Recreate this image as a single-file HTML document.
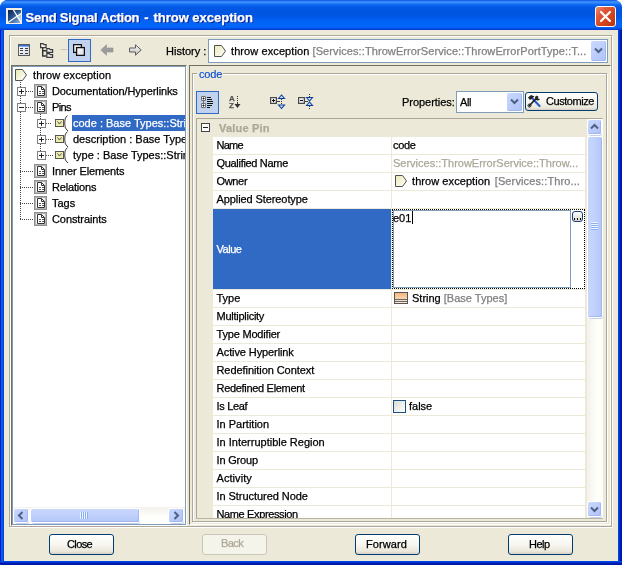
<!DOCTYPE html>
<html><head><meta charset="utf-8"><title>Send Signal Action - throw exception</title>
<style>
*{box-sizing:border-box;margin:0;padding:0}
html,body{width:622px;height:565px;overflow:hidden;background:#fff}
body{font-family:"Liberation Sans",sans-serif;font-size:11px;color:#000;position:relative;-webkit-text-stroke:0.25px currentColor}
.a{position:absolute}
.t{position:absolute;white-space:nowrap;line-height:13px;height:13px}
#win{will-change:transform;left:0;top:0;width:622px;height:565px;background:#0054e3;border-radius:8px 8px 0 0;overflow:hidden}
#title{left:0;top:0;width:622px;height:30px;background:linear-gradient(to bottom,#0a4fe0 0,#3f93ff 6%,#2f86fc 10%,#0d68f0 16%,#0359e4 24%,#0054e0 45%,#0058e8 58%,#0062f5 70%,#0066fa 85%,#0060f4 92%,#0048dc 96.5%,#0038cc 100%)}
#ttext{left:25.500px;top:9.500px;letter-spacing:-0.07px;font-size:13px;font-weight:bold;color:#fff;text-shadow:1px 1px 0 #0a1883;line-height:16px;height:16px}
#client{left:4px;top:30px;width:614px;height:531px;background:#ece9d8}
#close{left:595px;top:6px;width:21px;height:21px;border:1px solid #fff;border-radius:3px;background:linear-gradient(135deg,#ec8b6c 0%,#e0583a 30%,#d3451f 60%,#b8320c 100%)}
.etch{border:1px solid #aca899;box-shadow:1px 1px 0 #fff, inset 1px 1px 0 #fff}
.btn{height:21px;width:65px;border:1px solid #003c74;border-radius:3px;background:linear-gradient(to bottom,#fff 0%,#f7f6f0 50%,#ebe8dc 85%,#d6d0c5 100%);text-align:center;line-height:19px}
.row{position:absolute;left:213px;width:372px;height:17px;background:#fff}
.lbl{position:absolute;left:216.500px;white-space:nowrap;line-height:13px;height:13px}
.val{position:absolute;left:393px;white-space:nowrap;line-height:13px;height:13px}
.g{color:#aca899}
.tl{position:absolute;white-space:nowrap;line-height:13px;height:13px}
.sb{position:absolute;background:linear-gradient(135deg,#cbd9fe 0%,#bdcdfb 50%,#b0c2f6 100%);border-radius:2px;box-shadow:0 0 0 1px #fff,inset -1px -1px 0 #a3b8f3,1px 2px 0 0 #c5d0ee}
</style></head><body>
<div id="win" class="a">
<div id="title" class="a"></div>
<svg class="a" style="left:6px;top:8px" width="16" height="16" viewBox="0 0 16 16">
<defs><linearGradient id="pg" x1="0" y1="0" x2="1" y2="1"><stop offset="0" stop-color="#e9e9b4"/><stop offset="1" stop-color="#ffffff"/></linearGradient><linearGradient id="ig" x1="0" y1="0" x2="1" y2="1"><stop offset="0" stop-color="#0a1c4c"/><stop offset="0.45" stop-color="#2a5590"/><stop offset="1" stop-color="#8fbcec"/></linearGradient></defs>
<rect x="0" y="0" width="16" height="16" fill="#f4f0e0"/>
<rect x="2" y="2" width="13" height="13" fill="url(#ig)"/>
<path d="M15 5.500L10.500 8.700L15 14.500z" fill="#cfe4fa" opacity=".75"/>
<path d="M2 14.500L15 5.500" stroke="#fff" stroke-width="1.300" fill="none"/>
<path d="M7.500 2L15 14.500" stroke="#fff" stroke-width="1.300" fill="none"/>
</svg>
<div id="ttext" class="t"><span style="letter-spacing:-0.23px">Send Signal Action</span><span style="word-spacing:1.400px"> - </span><span style="letter-spacing:-0.02px">throw exception</span></div>
<div id="close" class="a"><svg width="19" height="19" viewBox="0 0 19 19" style="display:block"><path d="M5 5 L14 14 M14 5 L5 14" stroke="#fff" stroke-width="2.2" stroke-linecap="round"/></svg></div>
<div id="client" class="a"></div>

<!-- outer etched panel -->
<div class="a etch" style="left:9px;top:35px;width:603px;height:492px"></div>

<!-- toolbar -->
<svg class="a" style="left:18px;top:44px" width="12" height="12" viewBox="0 0 12 12">
<defs><linearGradient id="wg" x1="0" y1="0" x2="1" y2="1"><stop offset="0" stop-color="#ffffff"/><stop offset="1" stop-color="#d4d8e4"/></linearGradient>
<linearGradient id="ag" x1="0" y1="0" x2="0" y2="1"><stop offset="0" stop-color="#ffffff"/><stop offset="1" stop-color="#b8b8b8"/></linearGradient></defs>
<rect x="0.5" y="0.5" width="11" height="11" fill="url(#wg)" stroke="#5a5a5a"/>
<rect x="1" y="1" width="10" height="1" fill="#3f6fd8"/><rect x="1" y="2" width="10" height="1" fill="#86a6ea"/>
<path d="M2 4.500h3M7 4.500h3M2 6.500h3M7 6.500h3M2 9.500h3M7 9.500h3" stroke="#3c3c3c" stroke-width="1"/>
</svg>
<svg class="a" style="left:40px;top:43px" width="14" height="15" viewBox="0 0 14 15">
<path d="M2.700 5v8h4M2.700 7.700h4" stroke="#333" stroke-width="1.400" fill="none"/>
<path d="M0.600 0.600h2.500l1 1h2v3h-5.500z" fill="#efefef" stroke="#3c3c3c" stroke-width="1.200"/>
<path d="M6.800 5.600h2.500l1 1h2.300v2.800h-5.800z" fill="#efefef" stroke="#3c3c3c" stroke-width="1.200"/>
<path d="M6.800 10.600h2.500l1 1h2.300v2.800h-5.800z" fill="#efefef" stroke="#3c3c3c" stroke-width="1.200"/>
</svg>
<div class="a" style="left:61px;top:49px;width:6px;height:1px;background:#c8c4b0"></div>
<div class="a" style="left:68px;top:39px;width:23px;height:23px;background:#c1d2ee;border:1px solid #316ac5"></div>
<svg class="a" style="left:73px;top:44px" width="12" height="12" viewBox="0 0 12 12">
<rect x="0.600" y="0.600" width="7.800" height="7.800" fill="url(#wg)" stroke="#111" stroke-width="1.300"/>
<rect x="3.600" y="3.600" width="7.800" height="7.800" fill="url(#wg)" stroke="#111" stroke-width="1.300"/>
</svg>
<svg class="a" style="left:100px;top:44px" width="14" height="12" viewBox="0 0 14 12">
<path d="M0.800 6 L6.500 0.800 V4 H13 V8 H6.500 V11.200 Z" fill="#9c9c9c" stroke="#929292" stroke-width=".6"/>
</svg>
<svg class="a" style="left:128px;top:44px" width="14" height="12" viewBox="0 0 14 12">
<path d="M13.200 6 L7.500 0.800 V4 H1.500 V8 H7.500 V11.200 Z" fill="url(#ag)" stroke="#5c5c5c" stroke-width="1"/>
</svg>
<div class="t" style="left:166px;top:45px">History :</div>
<div class="a" style="left:208px;top:39px;width:400px;height:24px;background:#fff;border:1px solid #7f9db9"></div>
<svg class="a" style="left:214px;top:45px" width="14" height="13" viewBox="0 0 14 13">
<path d="M0.5 0.500H7.500L11.500 6L7.500 11.500H0.500Z" fill="url(#pg)" stroke="#505050"/>
</svg>
<div class="t" style="left:231px;top:45px;letter-spacing:0.09px">throw exception <span style="color:#808080">[Services::ThrowErrorService::ThrowErrorPortType::T...</span></div>
<div class="sb" style="left:591px;top:41px;width:15px;height:20px;box-shadow:inset -1px -1px 0 #a3b8f3"></div>
<svg class="a" style="left:594px;top:47px" width="9" height="7" viewBox="0 0 9 7"><path d="M1 1.500L4.500 5L8 1.500" stroke="#4d6185" stroke-width="2" fill="none"/></svg>

<!-- tree panel -->
<div class="a" style="left:11px;top:65px;width:176px;height:461px;background:#fff;border:1px solid;border-color:#716f64 #fff #fff #716f64;box-shadow:inset 0 0 0 1px #7f9db9"></div>
<div id="tree">
<svg class="a" style="left:15px;top:69px" width="13" height="12" viewBox="0 0 13 12"><path d="M0.5 0.500H7.500L11.500 6L7.500 11.500H0.500Z" fill="url(#pg)" stroke="#505050"/></svg>
<div class="tl" style="left:33px;top:69px;letter-spacing:0.07px">throw exception</div>
<div class="a" style="left:20px;top:82px;width:1px;height:138px;background:repeating-linear-gradient(to bottom,#444 0,#444 1px,transparent 1px,transparent 2px)"></div>
<div class="a" style="left:20px;top:91px;width:14px;height:1px;background:repeating-linear-gradient(to right,#444 0,#444 1px,transparent 1px,transparent 2px)"></div>
<div class="a" style="left:17px;top:87px;width:9px;height:9px;background:#fff;border:1px solid #808080"></div><div class="a" style="left:19px;top:91px;width:5px;height:1px;background:#222"></div><div class="a" style="left:21px;top:89px;width:1px;height:5px;background:#222"></div>
<svg class="a" style="left:34px;top:84px" width="13" height="14" viewBox="0 0 13 14"><rect x="0.5" y="0.5" width="12" height="13" fill="#d0d0d0" stroke="#909090"/><rect x="1.500" y="1.500" width="10" height="11" fill="#f2f2f2" stroke="#b4b4b4"/><path d="M3.500 2.500h4l3 3v6h-7z" fill="#fff" stroke="#333"/><path d="M7.500 2.500v3h3" fill="none" stroke="#333"/><path d="M5 7.500h2M8 7.500h2M5 9.500h2M8 9.500h2" stroke="#555"/></svg>
<div class="tl" style="left:52px;top:85px;letter-spacing:-0.11px">Documentation/Hyperlinks</div>
<div class="a" style="left:20px;top:107px;width:14px;height:1px;background:repeating-linear-gradient(to right,#444 0,#444 1px,transparent 1px,transparent 2px)"></div>
<div class="a" style="left:17px;top:103px;width:9px;height:9px;background:#fff;border:1px solid #808080"></div><div class="a" style="left:19px;top:107px;width:5px;height:1px;background:#222"></div>
<svg class="a" style="left:34px;top:100px" width="13" height="14" viewBox="0 0 13 14"><rect x="0.5" y="0.5" width="12" height="13" fill="#d0d0d0" stroke="#909090"/><rect x="1.500" y="1.500" width="10" height="11" fill="#f2f2f2" stroke="#b4b4b4"/><path d="M3.500 2.500h4l3 3v6h-7z" fill="#fff" stroke="#333"/><path d="M7.500 2.500v3h3" fill="none" stroke="#333"/><path d="M5 7.500h2M8 7.500h2M5 9.500h2M8 9.500h2" stroke="#555"/></svg>
<div class="tl" style="left:52px;top:101px;letter-spacing:-0.65px">Pins</div>
<div class="a" style="left:20px;top:171px;width:14px;height:1px;background:repeating-linear-gradient(to right,#444 0,#444 1px,transparent 1px,transparent 2px)"></div>
<svg class="a" style="left:34px;top:164px" width="13" height="14" viewBox="0 0 13 14"><rect x="0.5" y="0.5" width="12" height="13" fill="#d0d0d0" stroke="#909090"/><rect x="1.500" y="1.500" width="10" height="11" fill="#f2f2f2" stroke="#b4b4b4"/><path d="M3.500 2.500h4l3 3v6h-7z" fill="#fff" stroke="#333"/><path d="M7.500 2.500v3h3" fill="none" stroke="#333"/><path d="M5 7.500h2M8 7.500h2M5 9.500h2M8 9.500h2" stroke="#555"/></svg>
<div class="tl" style="left:52px;top:165px;letter-spacing:-0.11px">Inner Elements</div>
<div class="a" style="left:20px;top:187px;width:14px;height:1px;background:repeating-linear-gradient(to right,#444 0,#444 1px,transparent 1px,transparent 2px)"></div>
<svg class="a" style="left:34px;top:180px" width="13" height="14" viewBox="0 0 13 14"><rect x="0.5" y="0.5" width="12" height="13" fill="#d0d0d0" stroke="#909090"/><rect x="1.500" y="1.500" width="10" height="11" fill="#f2f2f2" stroke="#b4b4b4"/><path d="M3.500 2.500h4l3 3v6h-7z" fill="#fff" stroke="#333"/><path d="M7.500 2.500v3h3" fill="none" stroke="#333"/><path d="M5 7.500h2M8 7.500h2M5 9.500h2M8 9.500h2" stroke="#555"/></svg>
<div class="tl" style="left:52px;top:181px;letter-spacing:-0.18px">Relations</div>
<div class="a" style="left:20px;top:203px;width:14px;height:1px;background:repeating-linear-gradient(to right,#444 0,#444 1px,transparent 1px,transparent 2px)"></div>
<svg class="a" style="left:34px;top:196px" width="13" height="14" viewBox="0 0 13 14"><rect x="0.5" y="0.5" width="12" height="13" fill="#d0d0d0" stroke="#909090"/><rect x="1.500" y="1.500" width="10" height="11" fill="#f2f2f2" stroke="#b4b4b4"/><path d="M3.500 2.500h4l3 3v6h-7z" fill="#fff" stroke="#333"/><path d="M7.500 2.500v3h3" fill="none" stroke="#333"/><path d="M5 7.500h2M8 7.500h2M5 9.500h2M8 9.500h2" stroke="#555"/></svg>
<div class="tl" style="left:52px;top:197px">Tags</div>
<div class="a" style="left:20px;top:219px;width:14px;height:1px;background:repeating-linear-gradient(to right,#444 0,#444 1px,transparent 1px,transparent 2px)"></div>
<svg class="a" style="left:34px;top:212px" width="13" height="14" viewBox="0 0 13 14"><rect x="0.5" y="0.5" width="12" height="13" fill="#d0d0d0" stroke="#909090"/><rect x="1.500" y="1.500" width="10" height="11" fill="#f2f2f2" stroke="#b4b4b4"/><path d="M3.500 2.500h4l3 3v6h-7z" fill="#fff" stroke="#333"/><path d="M7.500 2.500v3h3" fill="none" stroke="#333"/><path d="M5 7.500h2M8 7.500h2M5 9.500h2M8 9.500h2" stroke="#555"/></svg>
<div class="tl" style="left:52px;top:213px;letter-spacing:-0.08px">Constraints</div>
<div class="a" style="left:40px;top:114px;width:1px;height:42px;background:repeating-linear-gradient(to bottom,#444 0,#444 1px,transparent 1px,transparent 2px)"></div>
<div class="a" style="left:46px;top:123px;width:6px;height:1px;background:repeating-linear-gradient(to right,#444 0,#444 1px,transparent 1px,transparent 2px)"></div>
<div class="a" style="left:37px;top:119px;width:9px;height:9px;background:#fff;border:1px solid #808080"></div><div class="a" style="left:39px;top:123px;width:5px;height:1px;background:#222"></div><div class="a" style="left:41px;top:121px;width:1px;height:5px;background:#222"></div>
<svg class="a" style="left:54px;top:115px" width="22" height="17" viewBox="0 0 22 17"><rect x="1.500" y="4.500" width="8" height="7" fill="#ecebb0" stroke="#555"/><path d="M3.500 6.500l2 2.500 2-2.500" fill="none" stroke="#444" stroke-width=".9"/><path d="M13.500 0.500C11 2.500 10.800 5 10.800 8S11 13.500 13.500 15.500" fill="none" stroke="#222" stroke-width=".9"/><rect x="13" y="15" width="1" height="1" fill="#333"/></svg>
<div class="a" style="left:72px;top:115px;width:113px;height:16px;background:#316ac5"></div>
<div class="tl" style="left:73px;top:117px;width:112px;overflow:hidden;color:#fff">code : Base Types::Strin</div>
<div class="a" style="left:46px;top:139px;width:8px;height:1px;background:repeating-linear-gradient(to right,#444 0,#444 1px,transparent 1px,transparent 2px)"></div>
<div class="a" style="left:37px;top:135px;width:9px;height:9px;background:#fff;border:1px solid #808080"></div><div class="a" style="left:39px;top:139px;width:5px;height:1px;background:#222"></div><div class="a" style="left:41px;top:137px;width:1px;height:5px;background:#222"></div>
<svg class="a" style="left:54px;top:131px" width="22" height="17" viewBox="0 0 22 17"><rect x="1.500" y="4.500" width="8" height="7" fill="#ecebb0" stroke="#555"/><path d="M3.500 6.500l2 2.500 2-2.500" fill="none" stroke="#444" stroke-width=".9"/><path d="M13.500 0.500C11 2.500 10.800 5 10.800 8S11 13.500 13.500 15.500" fill="none" stroke="#222" stroke-width=".9"/><rect x="13" y="15" width="1" height="1" fill="#333"/></svg>
<div class="tl" style="left:73px;top:133px;width:112px;overflow:hidden;">description : Base Typen</div>
<div class="a" style="left:46px;top:155px;width:8px;height:1px;background:repeating-linear-gradient(to right,#444 0,#444 1px,transparent 1px,transparent 2px)"></div>
<div class="a" style="left:37px;top:151px;width:9px;height:9px;background:#fff;border:1px solid #808080"></div><div class="a" style="left:39px;top:155px;width:5px;height:1px;background:#222"></div><div class="a" style="left:41px;top:153px;width:1px;height:5px;background:#222"></div>
<svg class="a" style="left:54px;top:147px" width="22" height="17" viewBox="0 0 22 17"><rect x="1.500" y="4.500" width="8" height="7" fill="#ecebb0" stroke="#555"/><path d="M3.500 6.500l2 2.500 2-2.500" fill="none" stroke="#444" stroke-width=".9"/><path d="M13.500 0.500C11 2.500 10.800 5 10.800 8S11 13.500 13.500 15.500" fill="none" stroke="#222" stroke-width=".9"/><rect x="13" y="15" width="1" height="1" fill="#333"/></svg>
<div class="tl" style="left:73px;top:149px;width:112px;overflow:hidden;">type : Base Types::Strin</div>
</div><!--/tree-->

<!-- right panel -->
<div class="a" style="left:189px;top:65px;width:422px;height:460px;border:1px solid;border-color:#716f64 #fff #fff #716f64"></div>
<div class="a etch" style="left:192px;top:73px;width:415px;height:449px"></div>
<div class="t" style="left:197px;top:68px;background:#ece9d8;color:#0046d5;padding:0 2px;width:26px;letter-spacing:-0.15px;-webkit-text-stroke:0.1px #0046d5">code</div>

<!-- prop toolbar -->
<div class="a" style="left:196px;top:91px;width:23px;height:23px;background:#c1d2ee;border:1px solid #316ac5"></div>
<svg class="a" style="left:201px;top:96px" width="13" height="12" viewBox="0 0 13 12">
<path d="M0.5 0.500h4v4h-4zM0.500 7.500h4v4h-4z" fill="#fff" stroke="#6e6e6e"/>
<path d="M2.500 5v2" stroke="#6e6e6e"/>
<path d="M1.500 2.500h2M1.500 9.500h2M2.500 1.500v2M2.500 8.500v2" stroke="#111"/>
<path d="M6 1.500h4M6 3.500h5M6 5.500h6M6 7.500h6M6 9.500h5M6 11.500h3" stroke="#111"/>
</svg>
<div class="t" style="left:229px;top:95px;font-size:8px;font-weight:bold;line-height:7px;height:14px;color:#555">A<br>Z</div>
<svg class="a" style="left:234px;top:96px" width="7" height="13" viewBox="0 0 7 13"><path d="M3.500 0v9" stroke="#333" stroke-dasharray="1 1"/><path d="M3.500 6v3" stroke="#333"/><path d="M0.500 8h6L3.500 12z" fill="#333"/></svg>
<svg class="a" style="left:270px;top:94px" width="16" height="16" viewBox="0 0 16 16">
<rect x="0.600" y="3.600" width="5.800" height="5.800" fill="url(#wg)" stroke="#4a4a4a" stroke-width="1.200"/><path d="M2 6.500h3M3.500 5v3" stroke="#111"/>
<path d="M7 7.500h3" stroke="#444"/><path d="M11.500 5v6" stroke="#333" stroke-dasharray="1 1"/>
<path d="M8.500 4.500L11.500 1L14.500 4.500zM8.500 11L11.500 14.500L14.500 11z" fill="#cfe0fa" stroke="#0c3c9c" stroke-width="1.100"/>
</svg>
<svg class="a" style="left:298px;top:94px" width="16" height="16" viewBox="0 0 16 16">
<rect x="0.600" y="3.600" width="5.800" height="5.800" fill="url(#wg)" stroke="#4a4a4a" stroke-width="1.200"/><path d="M2 6.500h3" stroke="#111"/>
<path d="M7 7.500h3" stroke="#444"/><path d="M11.500 0v15" stroke="#333" stroke-dasharray="1 1"/>
<path d="M8.500 3.500L11.500 7L14.500 3.500zM8.500 11.500L11.500 8L14.500 11.500z" fill="#cfe0fa" stroke="#0c3c9c" stroke-width="1.100"/>
</svg>
<div class="t" style="left:402px;top:96px;letter-spacing:-0.03px">Properties:</div>
<div class="a" style="left:456px;top:91px;width:68px;height:22px;background:#fff;border:1px solid #7f9db9"></div>
<div class="t" style="left:460px;top:96px;letter-spacing:-0.4px">All</div>
<div class="sb" style="left:507px;top:93px;width:15px;height:18px;box-shadow:inset -1px -1px 0 #a3b8f3"></div>
<svg class="a" style="left:510px;top:98px" width="9" height="7" viewBox="0 0 9 7"><path d="M1 1.500L4.500 5L8 1.500" stroke="#4d6185" stroke-width="2" fill="none"/></svg>
<div class="a btn" style="left:525px;top:92px;width:73px;height:19px"></div>
<svg class="a" style="left:527px;top:94px" width="15" height="14" viewBox="0 0 15 14">
<path d="M4 3L12.500 12" stroke="#2a5bd0" stroke-width="2.200" stroke-linecap="round"/>
<path d="M10.500 3L2.500 11.500" stroke="#222" stroke-width="1.800" stroke-linecap="round"/>
<path d="M1 3.500L4 1L7.500 2.500L5 4.500L3 6z" fill="#222"/>
<path d="M9.500 1.500a2.600 2.600 0 1 0 3.500 3.500l-2-0.500l-0.500-1z" fill="#222"/>
<circle cx="2.500" cy="11.500" r="1.500" fill="none" stroke="#222"/>
</svg>
<div class="t" style="left:546px;top:95px;letter-spacing:-0.45px">Customize</div>

<!-- table -->
<div class="a" style="left:196px;top:118px;width:407px;height:401px;background:#ece9d8;border:1px solid #aca899;border-right-color:#c0bdaa;border-bottom-color:#b8b5a2;overflow:hidden"></div>
<div class="a" style="left:201px;top:123px;width:9px;height:9px;background:#fff;border:1px solid #444"></div>
<div class="a" style="left:203px;top:127px;width:5px;height:1px;background:#222"></div>
<div class="t" style="left:219px;top:122px;font-weight:bold;color:#aca899;letter-spacing:0.2px">Value Pin</div>
<div id="rows">
<div class="row" style="top:137px;height:17px"></div>
<div class="lbl" style="top:139px;letter-spacing:-0.73px">Name</div>
<div class="val" style="top:139px"><span style="letter-spacing:-0.3px">code</span></div>
<div class="row" style="top:155px;height:17px"></div>
<div class="lbl" style="top:157px;letter-spacing:-0.31px">Qualified Name</div>
<div class="val" style="top:157px"><span class="g">Services::ThrowErrorService::Throw...</span></div>
<div class="row" style="top:173px;height:17px"></div>
<div class="lbl" style="top:175px;letter-spacing:-0.34px">Owner</div>
<div class="row" style="top:191px;height:17px"></div>
<div class="lbl" style="top:193px;letter-spacing:-0.09px">Applied Stereotype</div>
<div class="row" style="top:209px;height:80px"></div>
<div class="a" style="left:213px;top:209px;width:178px;height:80px;background:#316ac5"></div>
<div class="lbl" style="top:243px;color:#fff;letter-spacing:-0.46px">Value</div>
<div class="row" style="top:290px;height:17px"></div>
<div class="lbl" style="top:292px">Type</div>
<div class="row" style="top:308px;height:17px"></div>
<div class="lbl" style="top:310px;letter-spacing:-0.26px">Multiplicity</div>
<div class="row" style="top:326px;height:17px"></div>
<div class="lbl" style="top:328px;letter-spacing:-0.19px">Type Modifier</div>
<div class="row" style="top:344px;height:17px"></div>
<div class="lbl" style="top:346px;letter-spacing:-0.1px">Active Hyperlink</div>
<div class="row" style="top:362px;height:17px"></div>
<div class="lbl" style="top:364px;letter-spacing:-0.07px">Redefinition Context</div>
<div class="row" style="top:380px;height:17px"></div>
<div class="lbl" style="top:382px;letter-spacing:-0.31px">Redefined Element</div>
<div class="row" style="top:398px;height:17px"></div>
<div class="lbl" style="top:400px;letter-spacing:-0.32px">Is Leaf</div>
<div class="row" style="top:416px;height:17px"></div>
<div class="lbl" style="top:418px">In Partition</div>
<div class="row" style="top:434px;height:17px"></div>
<div class="lbl" style="top:436px">In Interruptible Region</div>
<div class="row" style="top:452px;height:17px"></div>
<div class="lbl" style="top:454px;letter-spacing:-0.17px">In Group</div>
<div class="row" style="top:470px;height:17px"></div>
<div class="lbl" style="top:472px;letter-spacing:0.06px">Activity</div>
<div class="row" style="top:488px;height:17px"></div>
<div class="lbl" style="top:490px;letter-spacing:-0.05px">In Structured Node</div>
<div class="row" style="top:506px;height:12px"></div>
<div class="lbl" style="top:508px;height:10px;overflow:hidden;letter-spacing:-0.37px">Name Expression</div>
<div class="a" style="left:391px;top:137px;width:1px;height:381px;background:#ece9d8"></div>
<svg class="a" style="left:395px;top:175px" width="14" height="13" viewBox="0 0 14 13"><path d="M0.5 0.500H7.500L11.500 6L7.500 11.500H0.500Z" fill="url(#pg)" stroke="#505050"/></svg>
<div class="val" style="left:412px;top:175px;letter-spacing:0.07px">throw exception <span style="color:#808080;letter-spacing:0.12px;margin-left:1.500px">[Services::Thro...</span></div>
<div class="a" style="left:392px;top:209px;width:193px;height:80px;border:1px dotted #000"></div>
<div class="a" style="left:393px;top:210px;width:178px;height:78px;border:1px solid #7f9db9;background:#fff"></div>
<div class="val" style="left:393px;top:212px">e01</div>
<div class="a" style="left:412px;top:211px;width:1px;height:13px;background:#000"></div>
<div class="a" style="left:572px;top:211px;width:11px;height:11px;border:1px solid #1c3f7c;border-radius:3px;background:linear-gradient(#fff,#d8d4c8)"></div>
<div class="a" style="left:574px;top:218px;width:1px;height:2px;background:#000;box-shadow:3px 0 0 #000,6px 0 0 #000"></div>
<svg class="a" style="left:394px;top:292px" width="14" height="12" viewBox="0 0 14 12"><defs><linearGradient id="og" x1="0" y1="0" x2="0" y2="1"><stop offset="0" stop-color="#f4b377"/><stop offset="1" stop-color="#fdeedd"/></linearGradient></defs><rect x="0.5" y="0.5" width="13" height="11" fill="url(#og)" stroke="#555"/><path d="M1 7.500h12M1 9.500h12" stroke="#666"/></svg>
<div class="val" style="left:412px;top:292px">String <span style="color:#808080">[Base Types]</span></div>
<div class="a" style="left:393px;top:400px;width:13px;height:13px;border:1px solid #1c5180;background:linear-gradient(135deg,#dcdcd4,#fff)"></div>
<div class="val" style="left:409px;top:400px">false</div>
</div><!--/rows-->

<!-- table scrollbar -->
<div class="a" style="left:587px;top:119px;width:16px;height:399px;background:linear-gradient(to right,#f3f1ec,#fefefb 60%)"></div>
<div class="sb" style="left:588px;top:120px;width:13px;height:14px"></div>
<svg class="a" style="left:590px;top:123px" width="9" height="7" viewBox="0 0 9 7"><path d="M1 5.500L4.500 2L8 5.500" stroke="#4d6185" stroke-width="2" fill="none"/></svg>
<div class="sb" style="left:588px;top:137px;width:14px;height:180px;background:linear-gradient(to right,#c9d7fc 0%,#c2d2fc 40%,#b3c6f8 100%)"></div>
<div class="a" style="left:591px;top:222px;width:7px;height:8px;background:repeating-linear-gradient(to bottom,#eef4fe 0,#eef4fe 1px,#8cb0f8 1px,#8cb0f8 2px)"></div>
<div class="sb" style="left:588px;top:502px;width:13px;height:14px"></div>
<svg class="a" style="left:590px;top:506px" width="9" height="7" viewBox="0 0 9 7"><path d="M1 1.500L4.500 5L8 1.500" stroke="#4d6185" stroke-width="2" fill="none"/></svg>

<!-- tree scrollbar -->
<div class="a" style="left:13px;top:507px;width:172px;height:17px;background:linear-gradient(to bottom,#f3f1ec,#fefefb 60%)"></div>
<div class="sb" style="left:14px;top:509px;width:14px;height:13px"></div>
<svg class="a" style="left:17px;top:511px" width="7" height="9" viewBox="0 0 7 9"><path d="M5.500 1L2 4.500L5.500 8" stroke="#4d6185" stroke-width="2" fill="none"/></svg>
<div class="sb" style="left:31px;top:509px;width:108px;height:13px;background:linear-gradient(to bottom,#c9d7fc 0%,#c2d2fc 40%,#b3c6f8 100%)"></div>
<div class="a" style="left:80px;top:512px;width:8px;height:7px;background:repeating-linear-gradient(to right,#eef4fe 0,#eef4fe 1px,#8cb0f8 1px,#8cb0f8 2px)"></div>
<div class="sb" style="left:169px;top:509px;width:14px;height:13px"></div>
<svg class="a" style="left:173px;top:511px" width="7" height="9" viewBox="0 0 7 9"><path d="M1.500 1L5 4.500L1.500 8" stroke="#4d6185" stroke-width="2" fill="none"/></svg>

<!-- buttons -->
<div class="a btn" style="left:49px;top:534px"></div><div class="t bt" style="left:67px;top:538px;letter-spacing:-0.62px">Close</div>
<div class="a btn" style="left:202px;top:534px;border-color:#c9c7ba;background:#f5f4ea"></div><div class="t bt" style="left:221px;top:537px;color:#aca899;letter-spacing:-0.6px">Back</div>
<div class="a btn" style="left:355px;top:534px"></div><div class="t bt" style="left:366px;top:538px;letter-spacing:0.1px">Forward</div>
<div class="a btn" style="left:508px;top:534px"></div><div class="t bt" style="left:529px;top:538px;letter-spacing:-0.5px">Help</div>

<!-- window borders -->
<div class="a" style="left:0;top:30px;width:4px;height:535px;background:linear-gradient(to right,#0019cf 0,#0019cf 1px,#0a5ae8 1px,#0858e6 3px,#0046dc 3px)"></div>
<div class="a" style="left:618px;top:30px;width:4px;height:535px;background:linear-gradient(to right,#0046e0 0,#0046e0 1px,#0030d0 1px,#0030d0 2px,#001aa8 2px)"></div>
<div class="a" style="left:0;top:561px;width:622px;height:4px;background:linear-gradient(to bottom,#0046e0 0,#0046e0 1px,#0030d0 1px,#0030d0 2px,#001aa8 2px)"></div>
</div>
<script>
</script>
</body></html>
